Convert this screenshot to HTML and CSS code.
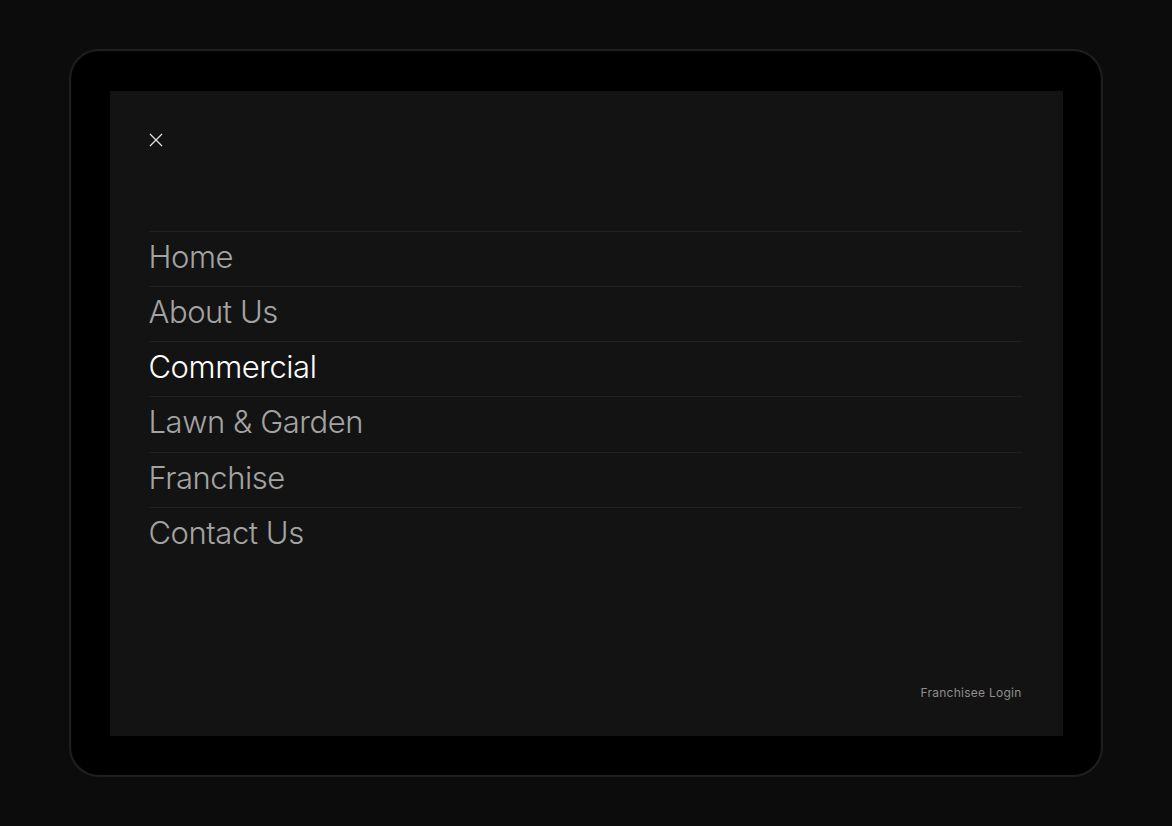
FILE: index.html
```html
<!DOCTYPE html>
<html lang="en">
<head>
<meta charset="utf-8">
<title>Menu</title>
<link rel="stylesheet" href="styles.css">
</head>
<body>
<div class="device">
  <div class="screen">
    <div class="top">
      <button class="close" aria-label="Close menu">
        <svg width="14" height="14" viewBox="0 0 14 14"><path d="M1 1 L13 13 M13 1 L1 13" stroke="#e6e6e6" stroke-width="1.2" fill="none"/></svg>
      </button>
    </div>
    <nav class="menu">
      <a class="item" href="#">Home</a>
      <a class="item" href="#">About Us</a>
      <a class="item active" href="#">Commercial</a>
      <a class="item" href="#">Lawn &amp; Garden</a>
      <a class="item" href="#">Franchise</a>
      <a class="item" href="#">Contact Us</a>
    </nav>
    <div class="footer">
      <a class="login" href="#">Franchisee Login</a>
    </div>
  </div>
</div>
</body>
</html>
```

FILE: styles.css
```css
html, body {
  margin: 0;
  height: 100%;
}
body {
  background: #0c0c0c;
  display: flex;
  align-items: center;
  justify-content: center;
  font-family: Inter, "Liberation Sans", sans-serif;
}
.device {
  box-sizing: border-box;
  width: 1034px;
  height: 728px;
  margin-top: -1px;
  margin-left: -1px;
  padding: 40px 38px 39px 39px;
  background: #000;
  border-radius: 30px;
  border: 2px solid #1d1f21;
  box-shadow: inset 0 0 0 1px #050505;
}
.screen {
  height: 100%;
  background: #131313;
  box-sizing: border-box;
  padding: 42px 41px 35px 39px;
  display: flex;
  flex-direction: column;
}
.top {
  height: 14px;
}
.close {
  background: none;
  border: 0;
  padding: 0;
  margin: 0;
  width: 14px;
  height: 14px;
  display: block;
  cursor: pointer;
}
.close svg {
  display: block;
}
.menu {
  margin-top: 84px;
  display: flex;
  flex-direction: column;
}
.item {
  display: block;
  box-sizing: border-box;
  height: 55.25px;
  line-height: 50px;
  border-top: 1px solid #202020;
  color: #a3a3a3;
  text-decoration: none;
  font-size: 31px;
  font-weight: 300;
  letter-spacing: -0.45px;
}
.item.active {
  color: #ffffff;
}
.footer {
  margin-top: auto;
  display: flex;
  justify-content: flex-end;
}
.login {
  color: #8e8e8e;
  text-decoration: none;
  font-size: 12px;
  letter-spacing: 0.25px;
  line-height: 16px;
}
```
